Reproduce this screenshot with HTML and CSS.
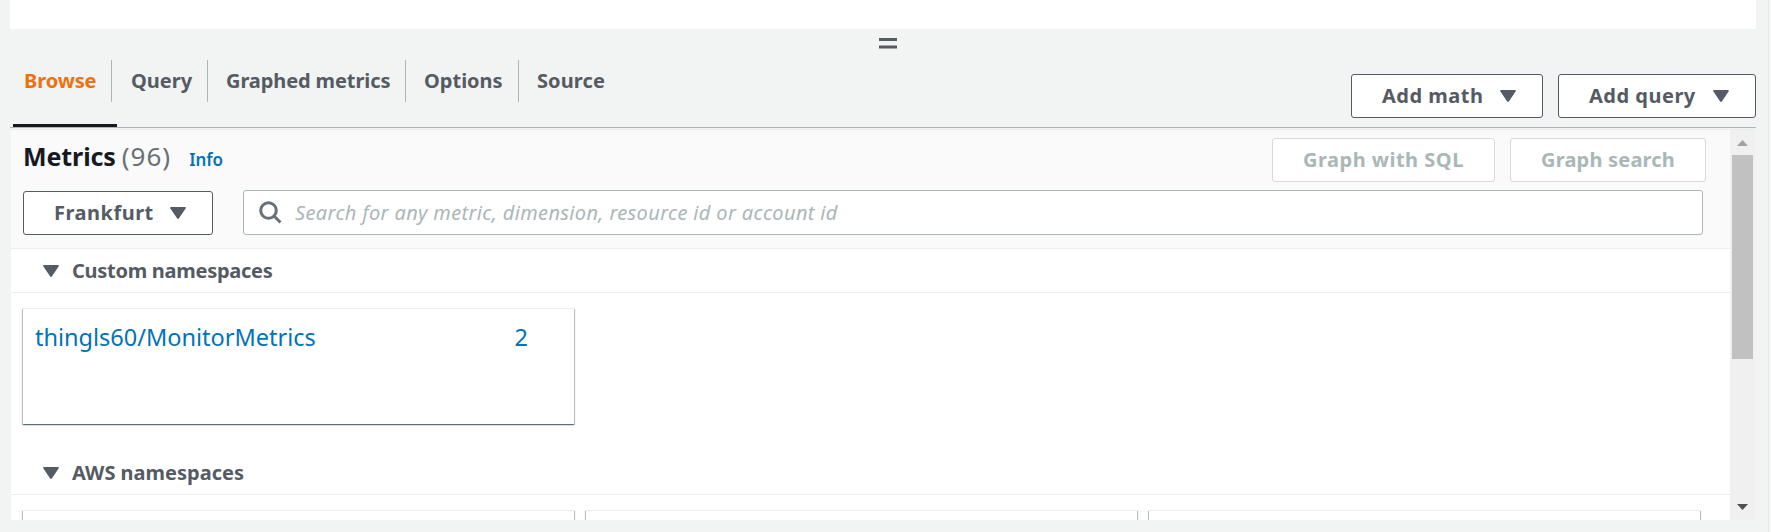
FILE: index.html
```
<!DOCTYPE html>
<html lang="en">
<head>
<meta charset="utf-8">
<title>CloudWatch metrics</title>
<link rel="stylesheet" href="styles.css">
</head>
<body>
<main class="page">
  <section class="graph-area"></section>
  <div class="splitter"><svg width="18" height="12" viewBox="0 0 18 12"><path fill="#545b64" d="M0 0h18v3H0zM0 7.4h18v3.2H0z"/></svg></div>
  <header class="toolbar">
    <nav class="tabs">
      <a class="tab tab-browse active"><span>Browse</span></a>
      <a class="tab tab-query"><span>Query</span></a>
      <a class="tab tab-graphed"><span>Graphed metrics</span></a>
      <a class="tab tab-options"><span>Options</span></a>
      <a class="tab tab-source"><span>Source</span></a>
    </nav>
    <div class="toolbar-actions">
      <button class="btn btn-math"><span>Add math</span><svg class="caret" viewBox="0 0 16 12"><path d="M1.2 0h13.6q1.6 0 .8 1.4L9 11.3q-1 1.2-2 0L.4 1.4q-.8-1.4.8-1.4z"/></svg></button>
      <button class="btn btn-query"><span>Add query</span><svg class="caret" viewBox="0 0 16 12"><path d="M1.2 0h13.6q1.6 0 .8 1.4L9 11.3q-1 1.2-2 0L.4 1.4q-.8-1.4.8-1.4z"/></svg></button>
    </div>
  </header>
  <section class="browser">
    <div class="content">
      <div class="filters">
        <div class="title-row">
          <h2>Metrics</h2><span class="count">(96)</span><a class="info">Info</a>
          <div class="graph-actions">
            <button class="btn disabled btn-sql"><span>Graph with SQL</span></button>
            <button class="btn disabled btn-search"><span>Graph search</span></button>
          </div>
        </div>
        <div class="search-row">
          <button class="btn btn-region"><span>Frankfurt</span><svg class="caret" viewBox="0 0 16 12"><path d="M1.2 0h13.6q1.6 0 .8 1.4L9 11.3q-1 1.2-2 0L.4 1.4q-.8-1.4.8-1.4z"/></svg></button>
          <div class="search">
            <svg width="23" height="23" viewBox="0 0 23 23" fill="none" stroke="#687078" stroke-width="3"><circle cx="9.5" cy="9.5" r="7.8"/><path d="M15 15l6.500 6.500"/></svg>
            <span>Search for any metric, dimension, resource id or account id</span>
          </div>
        </div>
      </div>
      <div class="group"><svg class="caret" viewBox="0 0 16 12"><path d="M1.2 0h13.6q1.6 0 .8 1.4L9 11.3q-1 1.2-2 0L.4 1.4q-.8-1.4.8-1.4z"/></svg><span class="custom-label">Custom namespaces</span></div>
      <div class="cards">
        <a class="card"><span>thingls60/MonitorMetrics</span><span>2</span></a>
      </div>
      <div class="group group-aws"><svg class="caret" viewBox="0 0 16 12"><path d="M1.2 0h13.6q1.6 0 .8 1.4L9 11.3q-1 1.2-2 0L.4 1.4q-.8-1.4.8-1.4z"/></svg><span>AWS namespaces</span></div>
      <div class="cards">
        <a class="card"></a><a class="card"></a><a class="card"></a>
      </div>
    </div>
    <div class="scrollbar">
      <svg width="11" height="6" viewBox="0 0 11 6"><path fill="#a3a3a3" d="M5.5 0L11 6H0z"/></svg>
      <div class="thumb"></div>
      <svg width="11" height="6" viewBox="0 0 11 6"><path fill="#505050" d="M5.5 6L0 0h11z"/></svg>
    </div>
  </section>
</main>
</body>
</html>
```
FILE: styles.css
```
* { box-sizing: border-box; }
body {
  margin: 0;
  height: 532px;
  overflow: hidden;
  background: #f2f3f3;
  font: 20px/40px "Noto Sans", sans-serif;
  color: #545b64;
}
.page {
  width: 1769px;
  height: 532px;
  padding: 0 12px 12px 10px;
  border-right: 1px solid #e4e8e8;
  display: flex;
  flex-direction: column;
}
.graph-area { height: 29px; background: #fff; }
.splitter { height: 31px; padding: 9px 0 0 869px; line-height: 0; }
.toolbar {
  height: 68px;
  display: flex;
  justify-content: space-between;
  border-bottom: 1px solid #aab7b8;
}
.tabs { display: flex; padding-left: 3px; font-weight: 700; line-height: 42px; }
.tab { height: 67px; white-space: nowrap; position: relative; }
.tab span { display: block; height: 42px; border-right: 1px solid #aab7b8; }
.tab-browse span { width: 99px; padding-left: 11px; letter-spacing: -.1px; }
.tab-query span { width: 96px; padding-left: 19px; }
.tab-graphed span { width: 198px; padding-left: 18px; letter-spacing: -.1px; }
.tab-options span { width: 113px; padding-left: 18px; }
.tab-source span { padding-left: 18px; border: 0; letter-spacing: .1px; }
.active { color: #ec7211; }
.active::after {
  content: "";
  position: absolute;
  left: 0;
  bottom: 0;
  width: 104px;
  height: 3px;
  background: #16191f;
}
.toolbar-actions { display: flex; gap: 15px; padding-top: 14px; }
.btn {
  height: 44px;
  margin: 0;
  padding: 0 0 0 30px;
  display: flex;
  align-items: center;
  background: #fff;
  border: 1px solid #545b64;
  border-radius: 3px;
  color: #545b64;
  font: 700 20px/40px "Noto Sans", sans-serif;
  letter-spacing: .5px;
  white-space: nowrap;
}
.caret { width: 16px; height: 12px; fill: #545b64; flex: none; }
.btn .caret { margin-left: auto; }
.btn-math { width: 192px; padding-right: 26px; }
.btn-query { width: 198px; padding-right: 26px; }
.btn-sql { width: 223px; }
.btn-search { width: 196px; letter-spacing: .2px; }
.disabled { color: #aab7b8; border-color: #d5dbdb; }
.browser {
  height: 391px;
  margin: 1px 1px 0;
  display: flex;
  border-top: 1px solid #eaeded;
  overflow: hidden;
}
.content { width: 1719px; background: #fff; }
.filters { height: 119px; background: #fafafa; border-bottom: 1px solid #eaeded; }
.title-row { display: flex; height: 60px; padding: 8px 24px 0 12px; }
h2 {
  margin: 0;
  font-size: 25px;
  font-weight: 700;
  line-height: 37px;
  color: #16191f;
  letter-spacing: -.1px;
}
.count { font-size: 26px; line-height: 36px; margin-left: 6px; color: #687078; letter-spacing: 1px; }
.info { font-size: 17px; line-height: 43px; font-weight: 600; color: #0073bb; margin-left: 18px; }
.graph-actions { display: flex; gap: 15px; margin-left: auto; }
.search-row { display: flex; gap: 30px; padding-left: 12px; align-items: flex-end; height: 45px; }
.btn-region { width: 190px; padding-right: 26px; }
.search {
  width: 1460px;
  height: 45px;
  border: 1px solid #aab7b8;
  border-radius: 3px;
  background: #fff;
  display: flex;
  align-items: center;
  gap: 13px;
  padding-left: 15px;
  font-style: italic;
  color: #aab7b8;
  letter-spacing: .35px;
}
.group {
  height: 44px;
  display: flex;
  align-items: center;
  padding: 1px 0 0 32px;
  gap: 13px;
  border-bottom: 1px solid #eaeded;
  font-weight: 700;
}
.custom-label { letter-spacing: -.27px; }
.cards { display: flex; gap: 12px; padding: 15px 0 0 12px; }
.card {
  width: 551px;
  height: 116px;
  flex: none;
  display: flex;
  justify-content: space-between;
  padding: 8px 46px 0 12px;
  border-top: 1px solid #eaeded;
  box-shadow: 0 1px 1px rgba(0, 28, 36, .4), 1px 1px 1px rgba(0, 28, 36, .22), -1px 1px 1px rgba(0, 28, 36, .22);
  color: #0073bb;
  font-size: 23.5px;
  background: #fff;
}
.group-aws { margin-top: 27px; }
.scrollbar {
  width: 25px;
  background: #f0f0f0;
  display: flex;
  flex-direction: column;
  align-items: center;
  padding: 10px 0 0;
}
.scrollbar svg { display: block; flex: none; }
.thumb { width: 21px; height: 204px; margin: 9px 0 145px; background: #c1c1c1; }
```
